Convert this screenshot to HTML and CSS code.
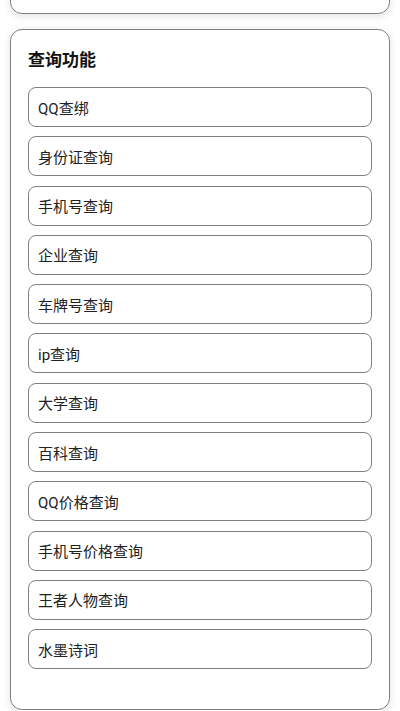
FILE: index.html
```html
<!DOCTYPE html>
<html lang="zh-CN">
<head>
<meta charset="UTF-8">
<meta name="viewport" content="width=device-width, initial-scale=1.0">
<title>查询功能</title>
<link rel="stylesheet" href="styles.css">
</head>
<body>

<div id="page">
  <div class="card prev"></div>

  <div class="card">
    <h2 class="card-title">查询功能</h2>
    <div class="btn-list">
      <button class="item-btn">QQ查绑</button>
      <button class="item-btn">身份证查询</button>
      <button class="item-btn">手机号查询</button>
      <button class="item-btn">企业查询</button>
      <button class="item-btn">车牌号查询</button>
      <button class="item-btn">ip查询</button>
      <button class="item-btn">大学查询</button>
      <button class="item-btn">百科查询</button>
      <button class="item-btn">QQ价格查询</button>
      <button class="item-btn">手机号价格查询</button>
      <button class="item-btn">王者人物查询</button>
      <button class="item-btn">水墨诗词</button>
    </div>
  </div>
</div>

</body>
</html>
```

FILE: styles.css
```css
* { margin: 0; padding: 0; box-sizing: border-box; }

body {
  font-family: Roboto, "Noto Sans CJK SC", sans-serif;
  background: #fff;
  color: #222;
  overflow: hidden;
}

#page {
  padding: 0 10px;
  display: flex;
  flex-direction: column;
  gap: 15px;
}

.card {
  background: #fff;
  border: 1px solid #808080;
  border-radius: 12px;
  box-shadow: 0 2px 8px rgba(0,0,0,0.12);
  padding: 18px 17px 40px;
}

.card.prev {
  height: 54px;
  margin-top: -40px;
  padding: 0;
}

.card-title {
  font-size: 17px;
  font-weight: 700;
  line-height: 24px;
  color: #111;
  margin-bottom: 15px;
}

.btn-list {
  display: flex;
  flex-direction: column;
  gap: 9.3px;
}

.item-btn {
  display: block;
  width: 100%;
  height: 40px;
  padding: 0 9px;
  text-align: left;
  background: #fff;
  border: 1px solid #808080;
  border-radius: 8px;
  font-family: inherit;
  font-size: 15px;
  color: #222;
  cursor: pointer;
}
```
